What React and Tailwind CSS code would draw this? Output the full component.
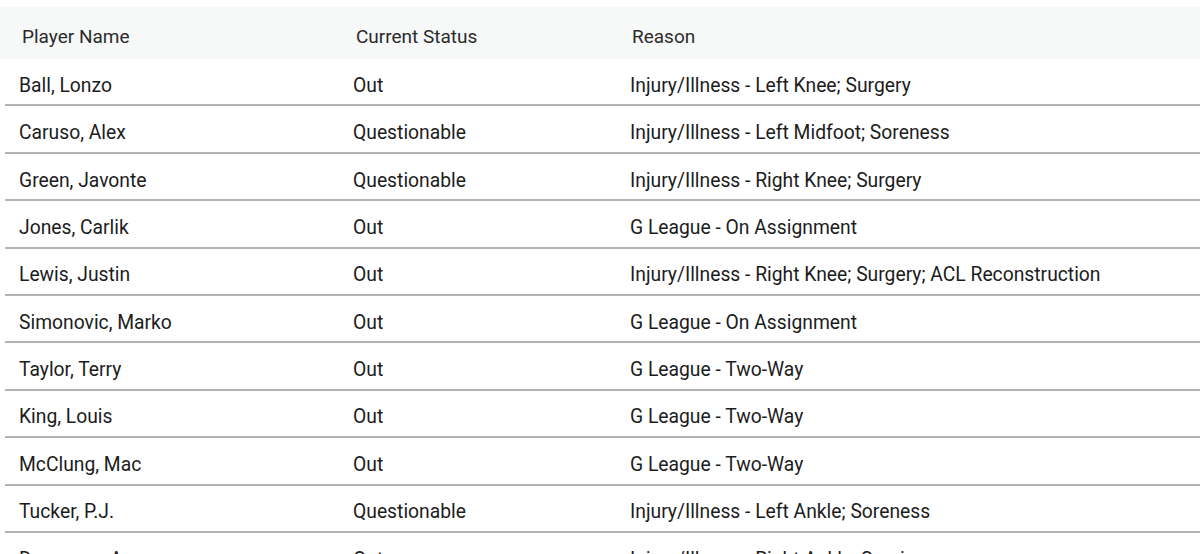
import React from 'react';

const players = [
  { name: 'Ball, Lonzo', status: 'Out', reason: 'Injury/Illness - Left Knee; Surgery' },
  { name: 'Caruso, Alex', status: 'Questionable', reason: 'Injury/Illness - Left Midfoot; Soreness' },
  { name: 'Green, Javonte', status: 'Questionable', reason: 'Injury/Illness - Right Knee; Surgery' },
  { name: 'Jones, Carlik', status: 'Out', reason: 'G League - On Assignment' },
  { name: 'Lewis, Justin', status: 'Out', reason: 'Injury/Illness - Right Knee; Surgery; ACL Reconstruction' },
  { name: 'Simonovic, Marko', status: 'Out', reason: 'G League - On Assignment' },
  { name: 'Taylor, Terry', status: 'Out', reason: 'G League - Two-Way' },
  { name: 'King, Louis', status: 'Out', reason: 'G League - Two-Way' },
  { name: 'McClung, Mac', status: 'Out', reason: 'G League - Two-Way' },
  { name: 'Tucker, P.J.', status: 'Questionable', reason: 'Injury/Illness - Left Ankle; Soreness' },
  { name: 'Dosunmu, Ayo', status: 'Out', reason: 'Injury/Illness - Right Ankle; Sprain' },
];

const InjuryReport = () => {
  return (
    <div className="h-[554px] overflow-hidden bg-white pt-[7px] font-['Roboto',sans-serif] text-[19.3px]">
      {/* Header */}
      <div className="grid h-[52px] grid-cols-[334px_276px_1fr] items-center bg-[#f7f8f8] pl-[22px] pt-[8px] text-[19px] text-[#2b2b2b]">
        <div>Player Name</div>
        <div>Current Status</div>
        <div>Reason</div>
      </div>

      {/* Rows */}
      <div className="ml-[5px]">
        {players.map((p) => (
          <div
            key={p.name}
            className="grid h-[47.4px] grid-cols-[334px_277px_1fr] items-center border-b-2 border-[#b3b3b3] pl-[14px] pt-[9px] text-[#1c1c1c]"
          >
            <div>{p.name}</div>
            <div>{p.status}</div>
            <div>{p.reason}</div>
          </div>
        ))}
      </div>
    </div>
  );
};

export default function App() {
  return <InjuryReport />;
}
